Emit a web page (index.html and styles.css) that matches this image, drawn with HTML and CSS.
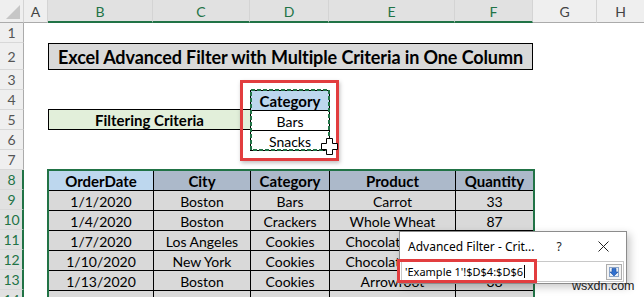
FILE: index.html
```html
<!DOCTYPE html>
<html>
<head>
<meta charset="utf-8">
<link rel="stylesheet" href="styles.css">
</head>
<body>
<div class="app">
  <div class="sheet">
    <div class="ch corner"><svg width="14" height="14" viewBox="0 0 14 14"><path d="M14 0 L14 14 L0 14 Z" fill="#c6c6c6"/></svg></div>
    <div class="ch">A</div>
    <div class="ch sel">B</div>
    <div class="ch sel">C</div>
    <div class="ch sel">D</div>
    <div class="ch sel">E</div>
    <div class="ch sel">F</div>
    <div class="ch">G</div>
    <div class="ch last">H</div>

    <div class="rowhdr">
      <div class="rn">1</div>
      <div class="rn tall">2</div>
      <div class="rn">3</div>
      <div class="rn">4</div>
      <div class="rn">5</div>
      <div class="rn">6</div>
      <div class="rn">7</div>
      <div class="rn sel">8</div>
      <div class="rn sel">9</div>
      <div class="rn sel">10</div>
      <div class="rn sel">11</div>
      <div class="rn sel">12</div>
      <div class="rn sel">13</div>
      <div class="rn sel">14</div>
    </div>

    <div class="title">Excel Advanced Filter with Multiple Criteria in One Column</div>

    <div class="filter">Filtering Criteria</div>

    <div class="crit">
      <div class="cell hdr-light">Category</div>
      <div class="cell white">Bars</div>
      <div class="cell white">Snacks</div>
      <svg class="ants" width="80" height="62" viewBox="0 0 80 62"><rect x="1" y="1" width="78" height="60" fill="none" stroke="#217346" stroke-width="2" stroke-dasharray="4 2"/></svg>
    </div>

    <div class="data">
      <div class="cell hdr-light">OrderDate</div>
      <div class="cell hdr-dark">City</div>
      <div class="cell hdr-dark">Category</div>
      <div class="cell hdr-dark">Product</div>
      <div class="cell hdr-dark">Quantity</div>

      <div class="cell">1/1/2020</div><div class="cell">Boston</div><div class="cell">Bars</div><div class="cell">Carrot</div><div class="cell">33</div>
      <div class="cell">1/4/2020</div><div class="cell">Boston</div><div class="cell">Crackers</div><div class="cell">Whole Wheat</div><div class="cell">87</div>
      <div class="cell">1/7/2020</div><div class="cell">Los Angeles</div><div class="cell">Cookies</div><div class="cell">Chocolate Chip</div><div class="cell">58</div>
      <div class="cell">1/10/2020</div><div class="cell">New York</div><div class="cell">Cookies</div><div class="cell">Chocolate Chip</div><div class="cell">82</div>
      <div class="cell">1/13/2020</div><div class="cell">Boston</div><div class="cell">Cookies</div><div class="cell">Arrowroot</div><div class="cell">38</div>
      <div class="cell">1/16/2020</div><div class="cell">Boston</div><div class="cell">Bars</div><div class="cell">Carrot</div><div class="cell">54</div>
    </div>
    <div class="data-sel"></div>
  </div>

  <div class="redbox crit-red"></div>
  <svg class="cursor" width="17" height="17" viewBox="0 0 17 17"><path d="M5.5 0.5 H11.5 V5.5 H16.5 V11.5 H11.5 V16.5 H5.5 V11.5 H0.5 V5.5 H5.5 Z" fill="#fff" stroke="#000" stroke-width="1"/></svg>

  <div class="dlg">
    <div class="dlg-bar">
      <span class="dlg-title">Advanced Filter - Crit...</span>
      <span class="dlg-btn">?</span>
      <span class="dlg-btn"><svg width="11" height="11" viewBox="0 0 11 11"><path d="M0.5 0.5 L10.5 10.5 M10.5 0.5 L0.5 10.5" stroke="#222" stroke-width="1"/></svg></span>
    </div>
    <div class="dlg-body">
      <div class="dlg-input">
        <span class="dlg-text">'Example 1'!$D$4:$D$6</span><span class="caret"></span>
        <span class="collapse"><svg width="16" height="16" viewBox="0 0 16 16"><rect x="0.5" y="0.5" width="15" height="15" fill="#f3f3f3" stroke="#adadad"/><rect x="3.5" y="3.5" width="9" height="9" fill="#e8eef7" stroke="#8aa4c8"/><path d="M6 4.5 H10 V8 H12 L8 12 L4 8 H6 Z" fill="#2f6fcf" stroke="#1d4f9c" stroke-width="0.6"/></svg></span>
      </div>
    </div>
  </div>
  <div class="redbox input-red"></div>

  <div class="watermark">wsxdn.com</div>
</div>
</body>
</html>
```

FILE: styles.css
```css
* { box-sizing: border-box; }
html, body { margin: 0; padding: 0; }
body {
  width: 644px;
  height: 297px;
  overflow: hidden;
  background: #fff;
  font-family: Lato, "Liberation Sans", sans-serif;
  color: #000;
}
.app {
  position: relative;
  width: 644px;
  height: 297px;
  overflow: hidden;
}
.sheet {
  display: grid;
  grid-template-columns: 24px 24px 105px 97px 79px 126px 78px 64px 1fr;
  grid-template-rows: 23px 20px 27px repeat(12, 20px);
}
.ch {
  grid-row: 1;
  background: #efefef;
  border-right: 1px solid #d4d4d4;
  border-bottom: 1px solid #ababab;
  display: flex;
  align-items: center;
  justify-content: center;
  font-size: 14px;
  color: #444;
}
.ch.sel {
  background: #e1e1e1;
  color: #217346;
  border-bottom: 2px solid #217346;
  padding-top: 1px;
}
.ch.last { border-right: none; }
.corner {
  align-items: flex-end;
  justify-content: flex-end;
  padding: 0 3px 3px 0;
}
.rowhdr {
  grid-column: 1;
  grid-row: 2 / 16;
  display: flex;
  flex-direction: column;
}
.rn {
  height: 20px;
  flex: none;
  background: #efefef;
  border-bottom: 1px solid #d8d8d8;
  border-right: 1px solid #ababab;
  display: flex;
  align-items: center;
  justify-content: center;
  font-size: 14px;
  color: #555;
}
.rn.tall { height: 27px; }
.rn.sel {
  background: #e1e1e1;
  color: #217346;
  border-right: 2px solid #217346;
  padding-left: 1px;
}
.title {
  grid-row: 3;
  grid-column: 3 / 8;
  height: 27px;
  background: #d9d9d9;
  border: 1px solid #000;
  display: flex;
  align-items: center;
  justify-content: center;
  font-weight: 700;
  font-size: 18px;
  letter-spacing: -0.1px;
  padding-top: 1px;
}
.filter {
  grid-row: 6;
  grid-column: 3 / 5;
  height: 21px;
  margin-top: -1px;
  width: 203px;
  background: #e2efda;
  border: 1px solid #000;
  display: flex;
  align-items: center;
  justify-content: center;
  font-weight: 700;
  font-size: 15px;
  padding-top: 1px;
}
.crit {
  grid-row: 5 / 8;
  grid-column: 5;
  position: relative;
  width: 80px;
  height: 61px;
  background: #000;
  padding: 1px;
  display: grid;
  grid-template-rows: 19px 19px 19px;
  row-gap: 1px;
}
.ants {
  position: absolute;
  left: 0;
  top: -1px;
}
.data {
  grid-row: 9 / 16;
  grid-column: 3 / 8;
  width: 486px;
  background: #000;
  padding: 1px;
  display: grid;
  grid-template-columns: 104px 96px 78px 125px 77px;
  grid-auto-rows: 19px;
  gap: 1px;
  align-self: start;
}
.cell {
  background: #d9d9d9;
  display: flex;
  align-items: center;
  justify-content: center;
  font-size: 14px;
  white-space: nowrap;
  overflow: hidden;
  padding-top: 1px;
}
.cell.white { background: #fff; }
.hdr-light { background: #bdd7ee; font-weight: 700; font-size: 15px; }
.hdr-dark { background: #acb9ca; font-weight: 700; font-size: 15px; }
.data-sel {
  grid-row: 9 / 16;
  grid-column: 3 / 8;
  margin: -1px -2px 0 -1px;
  border: 2px solid #217346;
  border-bottom: none;
  pointer-events: none;
  z-index: 2;
}
.redbox {
  position: absolute;
  border: 3px solid #e23d3f;
}
.crit-red {
  left: 240px;
  top: 80px;
  width: 99px;
  height: 81px;
  box-shadow: 1px 2px 4px rgba(0,0,0,0.25);
}
.cursor {
  position: absolute;
  left: 321px;
  top: 138px;
}
.dlg {
  position: absolute;
  left: 399px;
  top: 231px;
  width: 228px;
  height: 53px;
  background: #fff;
  border: 1px solid #8c8c8c;
  box-shadow: 3px 3px 8px rgba(0,0,0,0.22);
  font-family: "Noto Sans", "Open Sans", sans-serif;
  z-index: 3;
}
.dlg-bar {
  height: 28px;
  display: flex;
  align-items: center;
  padding-left: 8px;
  padding-right: 1px;
}
.dlg-title {
  flex: 1;
  font-size: 12px;
  color: #000;
}
.dlg-btn {
  width: 44px;
  height: 26px;
  display: flex;
  align-items: center;
  justify-content: center;
  font-size: 12px;
  color: #222;
}
.dlg-body {
  padding: 1px 2px 0 1px;
}
.dlg-input {
  height: 21px;
  border: 1px solid #c8c8c8;
  display: flex;
  align-items: center;
  padding-left: 3px;
  padding-right: 1px;
}
.dlg-text {
  font-size: 11px;
  color: #000;
}
.caret {
  width: 1px;
  height: 13px;
  background: #000;
  margin-left: 1px;
}
.collapse {
  margin-left: auto;
  display: flex;
}
.input-red {
  left: 397px;
  top: 259px;
  width: 140px;
  height: 24px;
  z-index: 4;
}
.watermark {
  position: absolute;
  left: 572px;
  top: 279px;
  font-family: "Liberation Sans", Arial, sans-serif;
  font-size: 12.5px;
  color: #222;
  z-index: 4;
}
```
